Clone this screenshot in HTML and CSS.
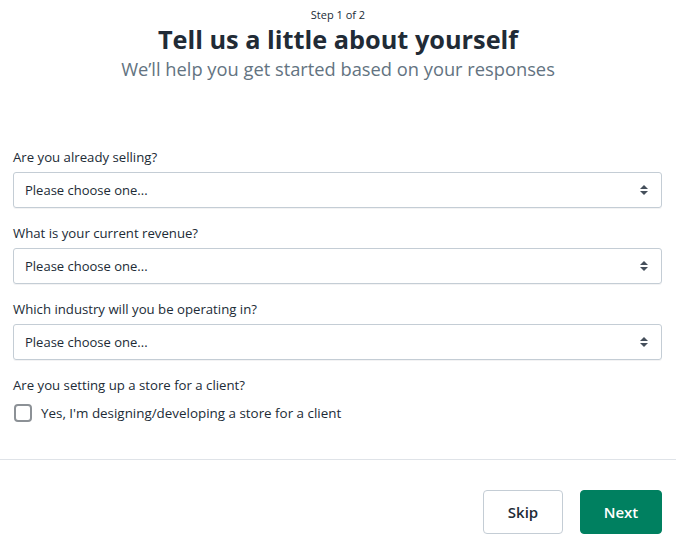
FILE: index.html
```html
<!DOCTYPE html>
<html>
<head>
<meta charset="utf-8">
<link rel="stylesheet" href="styles.css">
</head>
<body>
<div class="page">
  <header class="head">
    <div class="step">Step 1 of 2</div>
    <h1 class="title">Tell us a little about yourself</h1>
    <p class="subtitle">We’ll help you get started based on your responses</p>
  </header>
  <main class="form">
    <div class="field">
      <label class="label">Are you already selling?</label>
      <div class="select"><span>Please choose one...</span>
        <svg class="arrows" width="10" height="14" viewBox="0 0 10 14"><path d="M5 2 L9 6 H1 Z M5 12 L9 8 H1 Z" fill="#454f5b"/></svg>
      </div>
    </div>
    <div class="field">
      <label class="label">What is your current revenue?</label>
      <div class="select"><span>Please choose one...</span>
        <svg class="arrows" width="10" height="14" viewBox="0 0 10 14"><path d="M5 2 L9 6 H1 Z M5 12 L9 8 H1 Z" fill="#454f5b"/></svg>
      </div>
    </div>
    <div class="field">
      <label class="label">Which industry will you be operating in?</label>
      <div class="select"><span>Please choose one...</span>
        <svg class="arrows" width="10" height="14" viewBox="0 0 10 14"><path d="M5 2 L9 6 H1 Z M5 12 L9 8 H1 Z" fill="#454f5b"/></svg>
      </div>
    </div>
    <div class="field field-check">
      <label class="label">Are you setting up a store for a client?</label>
      <div class="check"><span class="box"></span><span>Yes, I'm designing/developing a store for a client</span></div>
    </div>
  </main>
  <footer class="foot">
    <button class="btn skip">Skip</button>
    <button class="btn next">Next</button>
  </footer>
</div>
</body>
</html>
```
FILE: styles.css
```css
* { box-sizing: border-box; }
html, body { margin: 0; padding: 0; background: #fff; }
body { font-family: "Open Sans", "Noto Sans", sans-serif; color: #212b36; width: 676px; height: 549px; overflow: hidden; }
.page { display: flex; flex-direction: column; }
.head { text-align: center; padding-top: 7px; }
.step { font-size: 11px; line-height: 15px; color: #212b36; }
.title { margin: 0; font-size: 25.3px; font-weight: 700; line-height: 35px; color: #212b36; }
.subtitle { margin: 0; font-size: 18.3px; line-height: 24px; color: #637381; }
.form { padding: 67px 14px 0 13px; display: flex; flex-direction: column; gap: 16px; }
.field { display: flex; flex-direction: column; gap: 6px; }
.field-check { gap: 10px; }
.label { font-size: 13.2px; line-height: 18px; }
.select { height: 36px; border: 1px solid #c4cdd5; border-radius: 3px; display: flex; align-items: center; justify-content: space-between; padding: 0 12px 0 11px; font-size: 13px; box-shadow: 0 1px 0 rgba(22,29,37,0.05); }
.check { display: flex; align-items: center; gap: 9px; font-size: 13.4px; padding-left: 1px; }
.box { width: 18px; height: 18px; border: 2px solid #8c9196; border-radius: 4px; }
.foot { margin-top: 37px; border-top: 1px solid #dfe3e8; padding: 30px 14px 0 0; display: flex; justify-content: flex-end; gap: 17px; }
.btn { height: 44px; border-radius: 4px; font-family: inherit; font-size: 15px; font-weight: 600; cursor: pointer; }
.skip { width: 80px; background: #fff; border: 1px solid #c4cdd5; color: #212b36; }
.next { width: 82px; background: #008060; border: 1px solid #008060; color: #fff; }
```
